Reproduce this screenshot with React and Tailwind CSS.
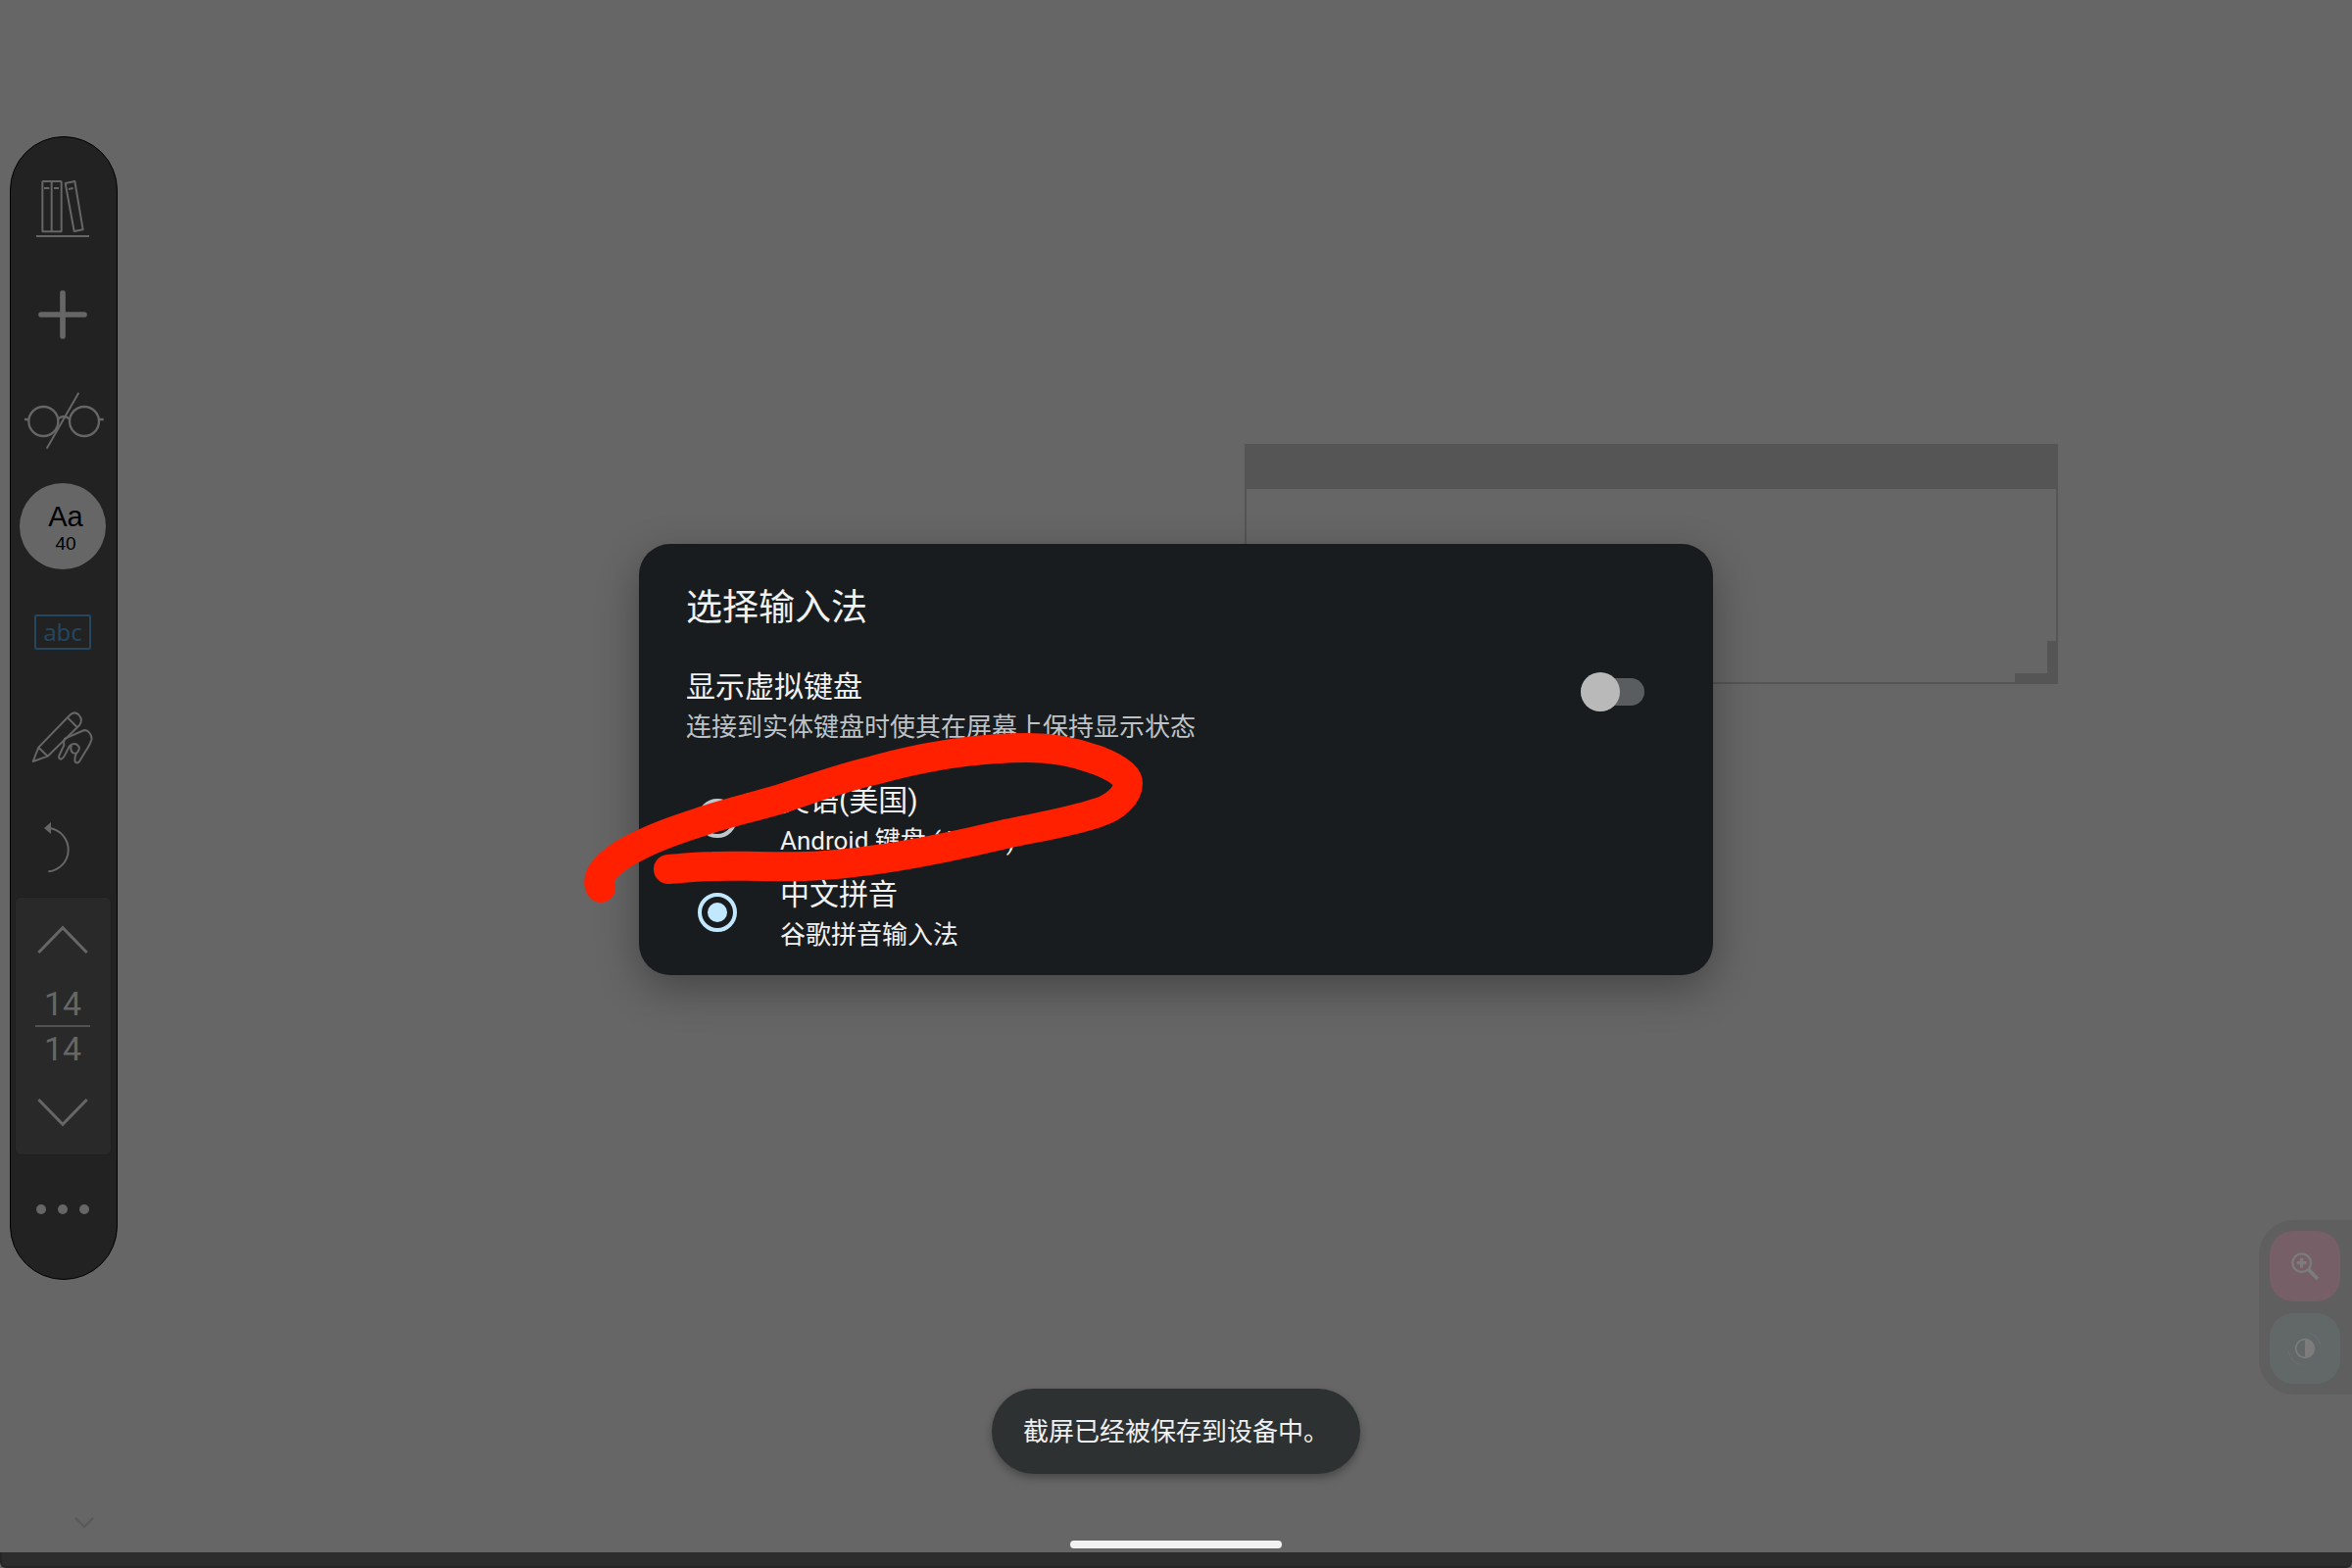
import { useState } from 'react';

const BooksIcon = () => (
    <svg viewBox="0 0 180 180" className="size-[60px]" fill="none" stroke="currentColor" strokeWidth="6" strokeLinejoin="round">
        <rect x="28" y="6" width="58" height="154" rx="2" />
        <path d="M56 6V160M33 27H49M63 27H78M9 174H171" />
        <path d="M98 12L127 6L152 154L125 159ZM108 30L122 27" />
    </svg>
);

const PlusIcon = () => (
    <svg viewBox="0 0 150 150" className="size-[50px]" fill="none" stroke="currentColor" strokeWidth="17" strokeLinecap="round">
        <path d="M75 9V141M9 75H141" />
    </svg>
);

const GlassesIcon = () => (
    <svg viewBox="0 0 252 180" className="h-[60px] w-[84px]" fill="none" stroke="currentColor" strokeWidth="7">
        <circle cx="67" cy="93" r="45" />
        <circle cx="192" cy="93" r="45" />
        <path d="M111 86Q129 70 147 86M9 87H22M238 87H251" />
        <path d="M175 5L77 176" strokeWidth="6" />
    </svg>
);

const PencilHandIcon = () => (
    <svg viewBox="0 0 192 192" className="size-16" fill="none" stroke="currentColor" strokeWidth="6" strokeLinejoin="round" strokeLinecap="round">
        <path d="M5 168L22 125L117 27Q131 12 145 25Q159 39 148 56L50 152L5 168ZM22 125L50 152M111 34L140 63" />
        <path d="M103 98L155 75Q166 69 175 77Q187 90 184 102Q178 120 165 138L147 168Q140 176 134 169Q131 158 137 145" />
        <path d="M103 98Q98 102 100 118L85 150Q83 160 90 161Q97 160 104 146L116 122Q124 112 137 115Q149 121 146 131Q140 147 128 142Q118 136 122 120" />
    </svg>
);

const UndoIcon = () => (
    <svg viewBox="0 0 180 180" className="size-[60px]" fill="none" stroke="currentColor" strokeWidth="6">
        <path d="M50 42A67 67 0 0 1 46 175" />
        <path d="M33 42L54 24V60Z" fill="currentColor" stroke="none" />
    </svg>
);

const ChevronIcon = ({ down }) => (
    <svg viewBox="0 0 156 90" className="h-[30px] w-[52px]" fill="none" stroke="currentColor" strokeWidth="9">
        <path d={down ? 'M4 6L78 82L152 6' : 'M4 84L78 8L152 84'} />
    </svg>
);

const ZoomIcon = () => (
    <svg viewBox="0 0 84 84" className="size-7" fill="none" stroke="currentColor" strokeWidth="7">
        <circle cx="32" cy="32" r="28" />
        <path d="M53 53L81 81" strokeWidth="11" />
        <path d="M32 17V47M17 32H47" strokeWidth="10" />
    </svg>
);

const ContrastIcon = () => (
    <svg viewBox="0 0 108 108" className="size-9" fill="none" stroke="currentColor">
        <circle cx="54" cy="54" r="28" strokeWidth="5" />
        <path d="M54 25A29 29 0 0 1 54 83Z" fill="currentColor" stroke="none" />
        <path d="M66 6Q94 14 102 42M4 64Q12 96 40 103" strokeWidth="3" opacity="0.4" />
    </svg>
);

const ToolButton = ({ label, children }) => (
    <button aria-label={label} className="flex h-[108px] w-full items-center justify-center">
        {children}
    </button>
);

const Toolbar = () => (
    <nav className="mt-[139px] ml-2.5 flex w-[110px] flex-col items-center self-start rounded-full border border-black bg-[#222222] pt-[19px] pr-0.5 pb-4 text-[#666666]">
        <ToolButton label="Library"><BooksIcon /></ToolButton>
        <ToolButton label="Add"><PlusIcon /></ToolButton>
        <ToolButton label="Read mode"><GlassesIcon /></ToolButton>
        <ToolButton label="Text size">
            <span className="flex size-[88px] flex-col items-center justify-center rounded-full bg-[#666666] pt-1 pl-1.5 font-['Liberation_Sans',sans-serif] text-black">
                <span className="text-[29px] leading-8">Aa</span>
                <span className="text-[19px] leading-6">40</span>
            </span>
        </ToolButton>
        <ToolButton label="Text box">
            <span className="flex h-9 w-[58px] items-center justify-center rounded-xs border-2 border-[#25465f] font-['Noto_Sans',sans-serif] text-2xl leading-none text-[#25465f]">
                abc
            </span>
        </ToolButton>
        <ToolButton label="Draw"><PencilHandIcon /></ToolButton>
        <ToolButton label="Undo"><UndoIcon /></ToolButton>

        <div className="flex w-[99px] flex-col items-center rounded-md border border-[#1f1f1f] bg-[#292929] text-[34px] leading-[44px]">
            <button aria-label="Previous page" className="flex h-[86px] w-full items-center justify-center"><ChevronIcon /></button>
            <span>14</span>
            <span className="h-0.5 w-14 bg-[#525252]"></span>
            <span>14</span>
            <button aria-label="Next page" className="flex h-[86px] w-full items-center justify-center"><ChevronIcon down /></button>
        </div>

        <button aria-label="More" className="flex h-[110px] w-full items-center justify-center gap-3">
            <span className="size-2.5 rounded-full bg-current"></span>
            <span className="size-2.5 rounded-full bg-current"></span>
            <span className="size-2.5 rounded-full bg-current"></span>
        </button>
    </nav>
);

const SideDock = () => (
    <div className="mt-[1245px] flex flex-col gap-3 self-start rounded-l-[36px] bg-[#5f5f5f] py-[11px] pr-3 pl-[11px] text-[#7c7c7c]">
        <button aria-label="Zoom in" className="flex size-[72px] items-center justify-center rounded-3xl bg-[#765f67]"><ZoomIcon /></button>
        <button aria-label="Contrast" className="flex size-[72px] items-center justify-center rounded-3xl bg-[#626868]"><ContrastIcon /></button>
    </div>
);

// empty text box lying on the canvas, with its resize grip
const TextFrame = () => (
    <div className="absolute top-[453px] left-[1270px] h-[245px] w-[830px] border-2 border-[#555555]">
        <div className="h-11 bg-[#555555]"></div>
        <div className="absolute right-0 bottom-0 h-[42px] w-[9px] bg-[#555555]"></div>
        <div className="absolute right-0 bottom-0 h-[9px] w-[42px] bg-[#555555]"></div>
    </div>
);

const methods = [
    { id: 'en', name: '英语(美国)', app: 'Android 键盘 (AOSP)' },
    { id: 'zh', name: '中文拼音', app: '谷歌拼音输入法' },
];

const InputMethodDialog = () => {
    const [selected, setSelected] = useState('zh');
    const [showKeyboard, setShowKeyboard] = useState(false);

    return (
        <div className="absolute inset-0 flex items-center justify-center pb-[50px]">
            <section role="dialog" aria-labelledby="ime-title" className="relative w-[1096px] max-w-full rounded-[32px] bg-[#191c1e] pt-[42px] pb-4 text-[#f0f1f2] shadow-[0_14px_44px_rgba(0,0,0,0.32)]">
                <h1 id="ime-title" className="px-12 text-[37px] leading-[48px]">选择输入法</h1>

                <label className="mt-[34px] mb-[26px] flex items-start justify-between pr-[70px] pl-12">
                    <span className="flex flex-col">
                        <span className="text-[30px] leading-[44px]">显示虚拟键盘</span>
                        <span className="text-[26px] leading-[38px] text-[#bec3c7]">连接到实体键盘时使其在屏幕上保持显示状态</span>
                    </span>
                    <input
                        type="checkbox"
                        role="switch"
                        checked={showKeyboard}
                        onChange={(e) => setShowKeyboard(e.target.checked)}
                        className="relative mt-[7px] h-10 w-[65px] appearance-none before:absolute before:inset-x-0 before:inset-y-1.5 before:rounded-full before:bg-[#595d60] after:absolute after:left-0 after:size-10 after:rounded-full after:bg-[#b9b9b9] checked:after:left-6"
                    />
                </label>

                {methods.map((m) => (
                    <label key={m.id} className="flex h-24 items-center gap-11 pl-[60px]">
                        <input
                            type="radio"
                            name="ime"
                            checked={selected === m.id}
                            onChange={() => setSelected(m.id)}
                            className="size-10 appearance-none rounded-full border-4 border-[#bfc7cc] bg-clip-content p-1.5 checked:border-[#c2e8ff] checked:bg-[#c2e8ff]"
                        />
                        <span className="flex flex-col pt-0.5">
                            <span className="text-[30px] leading-[44px]">{m.name}</span>
                            <span className="text-[26px] leading-[38px]">{m.app}</span>
                        </span>
                    </label>
                ))}

                {/* freehand marker loop */}
                <svg viewBox="0 0 1096 440" className="pointer-events-none absolute top-0 left-0 h-[440px] w-[1096px] overflow-visible" fill="none" stroke="#ff2000" strokeWidth="30" strokeLinecap="round" strokeLinejoin="round">
                    <path d="M-39 351C-48 336 -20 317 0 308C19 298 40 291 62 284C88 275 115 269 142 261C173 251 205 239 240 231C290 217 345 208 397 208C447 208 499 229 499 244C499 257 485 269 469 274C440 284 407 289 374 296C337 305 300 313 263 319C232 324 200 328 169 329C137 330 106 328 75 329C60 329 45 331 30 332" />
                </svg>
            </section>
        </div>
    );
};

export default function App() {
    return (
        <div className="relative flex min-h-screen flex-col overflow-hidden bg-[#666666] font-['Roboto','Noto_Sans_CJK_SC',sans-serif]">
            <main className="flex flex-1 justify-between">
                <Toolbar />
                <SideDock />
            </main>

            <button aria-label="Collapse" className="absolute bottom-10 left-[76px] text-[#595959]">
                <svg viewBox="0 0 20 12" className="h-3 w-5" fill="none" stroke="currentColor" strokeWidth="2">
                    <path d="M1 1L10 10L19 1" />
                </svg>
            </button>

            <footer className="h-4 rounded-b-md border-b-2 border-l-2 border-[#262626] bg-[#2d2d2d]"></footer>

            <TextFrame />
            <InputMethodDialog />

            <div role="status" className="absolute bottom-24 left-1/2 flex h-[87px] -translate-x-1/2 items-center rounded-full bg-[#2d3132] px-8 text-[26px] leading-[38px] whitespace-nowrap text-[#eff1f2] shadow-[0_4px_8px_rgba(0,0,0,0.3)]">
                截屏已经被保存到设备中。
            </div>
            <div className="absolute bottom-5 left-1/2 h-2 w-[216px] -translate-x-1/2 rounded-full bg-[#f2f2f2]"></div>
        </div>
    );
}
